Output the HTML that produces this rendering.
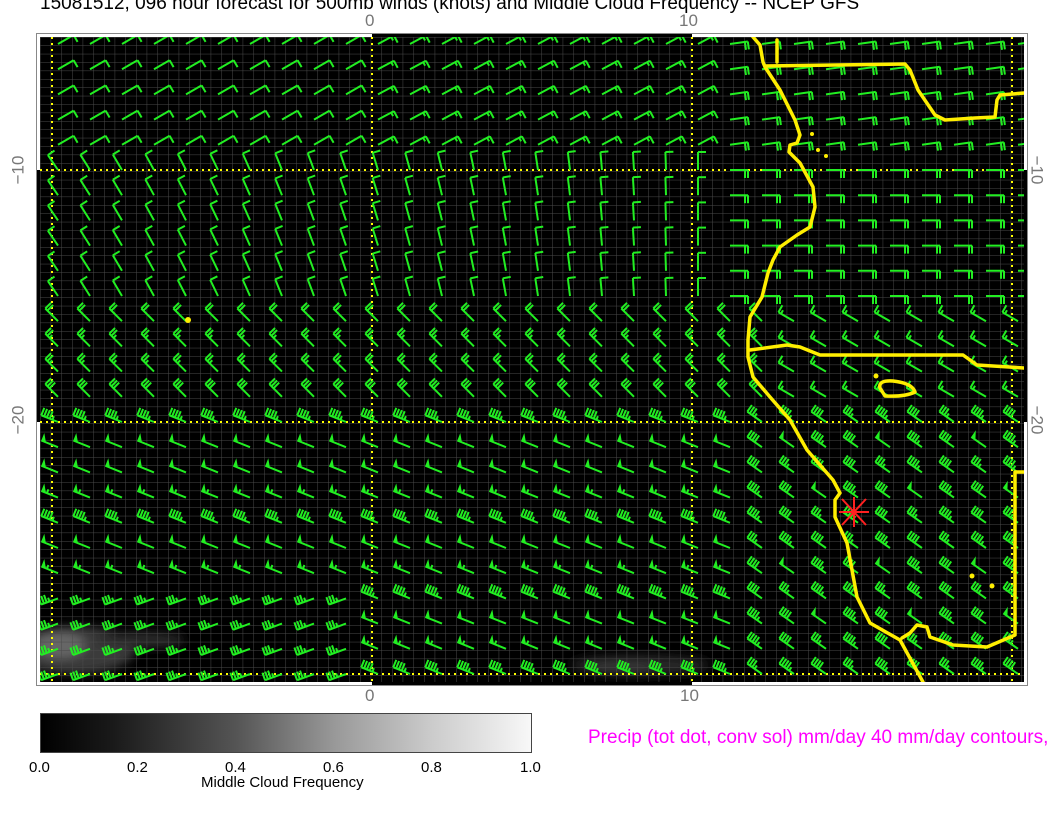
<!DOCTYPE html>
<html><head><meta charset="utf-8">
<style>
html,body{margin:0;padding:0;background:#fff;width:1056px;height:816px;overflow:hidden;position:relative;font-family:"Liberation Sans",Arial,sans-serif;}
.t{position:absolute;white-space:nowrap;}
</style></head>
<body>
<div class="t" style="left:40px;top:-7px;font-size:19px;color:#000;">15081512, 096 hour forecast for 500mb winds (knots) and Middle Cloud Frequency -- NCEP GFS</div>
<svg id="s" width="1056" height="816" style="position:absolute;left:0;top:0">
<defs>
<filter id="bl" x="-50%" y="-50%" width="200%" height="200%"><feGaussianBlur stdDeviation="5"/></filter>
<linearGradient id="cb" x1="0" x2="1" y1="0" y2="0">
<stop offset="0" stop-color="#000"/><stop offset="0.15" stop-color="#1a1a1a"/><stop offset="0.4" stop-color="#555"/><stop offset="0.6" stop-color="#999"/><stop offset="0.8" stop-color="#ccc"/><stop offset="1" stop-color="#f8f8f8"/>
</linearGradient>
<pattern id="g" x="40" y="37" width="10.667" height="8.4" patternUnits="userSpaceOnUse">
<path d="M0 0V8.4M0 0H10.667" stroke="#4a4a4a" stroke-width="1" fill="none"/>
</pattern>
<clipPath id="pc"><rect x="40" y="37" width="984" height="645"/></clipPath>
</defs>
<rect x="36.5" y="33.5" width="991" height="652" fill="#fff" stroke="#888" stroke-width="1"/>
<rect x="372" y="34" width="320" height="3" fill="#000"/>
<rect x="372" y="682" width="320" height="3" fill="#000"/>
<rect x="37" y="170" width="3" height="252" fill="#000"/>
<rect x="1024" y="170" width="3" height="252" fill="#000"/>
<rect x="40" y="37" width="984" height="645" fill="#000"/>
<g clip-path="url(#pc)">
<g filter="url(#bl)">
<ellipse cx="75" cy="650" rx="60" ry="24" fill="#3a3a3a"/>
<ellipse cx="60" cy="645" rx="25" ry="13" fill="#666"/>
<ellipse cx="140" cy="640" rx="45" ry="8" fill="#2a2a2a"/>
<ellipse cx="640" cy="665" rx="70" ry="10" fill="#262626"/>
<ellipse cx="620" cy="668" rx="35" ry="6" fill="#383838"/>
</g>
<rect x="40" y="37" width="984" height="645" fill="url(#g)"/>
<g stroke="#ffff00" stroke-width="2" stroke-dasharray="2 4" fill="none">
<path d="M52 37V682M372 37V682M692 37V682M1012 37V682M40 170H1024M40 422H1024M40 674H1024"/>
</g>
<g id="barbs" stroke="#22ee22" stroke-width="2" fill="#22ee22" stroke-linecap="butt"></g>
<g stroke="#ffee00" stroke-width="3.5" fill="none" stroke-linejoin="round" stroke-linecap="round">
<path d="M753 37L760 45L763 62L765 67L780 90L795 120L800 135L797 143L790 145L789 152L800 163L813 187L815 207L810 227L797 235L780 247L773 260L768 273L762 297L750 317L748 340L748 357L753 377L770 397L790 420L807 450L833 480L840 493L835 500L835 517L847 543L852 570L857 597L870 623L900 640L923 682"/>
<path d="M777 40L777 62M765 66L905 64L910 70L918 90L935 115L945 120L975 118L995 117L997 100L1000 95L1024 93"/>
<path d="M750 350L787 345L800 347L820 355L963 355L977 365L1024 368"/>
<path d="M1024 472H1015V635L987 647L953 645L930 637L927 627L917 625L910 633L902 638"/>
<path d="M880 388Q878 380 893 381Q912 383 915 392Q905 397 885 396Z"/>
</g>
<g fill="#ffee00">
<circle cx="188" cy="320" r="3"/><circle cx="812" cy="134" r="2"/><circle cx="818" cy="150" r="2"/><circle cx="826" cy="156" r="2"/>
<circle cx="876" cy="376" r="2.5"/><circle cx="972" cy="576" r="2.5"/><circle cx="992" cy="586" r="2.5"/>
</g>
<g stroke="#ff2020" stroke-width="2">
<path d="M854 497V527M839 512H869M842 499L866 525M842 525L866 499"/>
</g>
</g>
<rect x="40.5" y="713.5" width="491" height="39" fill="url(#cb)" stroke="#444" stroke-width="1"/>
</svg>
<div class="t" style="left:365px;top:11px;font-size:17px;color:#777;">0</div>
<div class="t" style="left:679px;top:11px;font-size:17px;color:#777;">10</div>
<div class="t" style="left:365px;top:686px;font-size:17px;color:#777;">0</div>
<div class="t" style="left:680px;top:686px;font-size:17px;color:#777;">10</div>
<div class="t" style="left:4px;top:160px;font-size:17px;color:#777;transform:rotate(-90deg);">−10</div>
<div class="t" style="left:4px;top:410px;font-size:17px;color:#777;transform:rotate(-90deg);">−20</div>
<div class="t" style="left:1022px;top:160px;font-size:17px;color:#777;transform:rotate(90deg);">−10</div>
<div class="t" style="left:1022px;top:410px;font-size:17px;color:#777;transform:rotate(90deg);">−20</div>
<div class="t" style="left:29px;top:759px;font-size:15px;">0.0</div>
<div class="t" style="left:127px;top:759px;font-size:15px;">0.2</div>
<div class="t" style="left:225px;top:759px;font-size:15px;">0.4</div>
<div class="t" style="left:323px;top:759px;font-size:15px;">0.6</div>
<div class="t" style="left:421px;top:759px;font-size:15px;">0.8</div>
<div class="t" style="left:520px;top:759px;font-size:15px;">1.0</div>
<div class="t" style="left:201px;top:774px;font-size:15px;">Middle Cloud Frequency</div>
<div class="t" style="left:588px;top:727px;font-size:19px;color:#ff00ff;">Precip (tot dot, conv sol) mm/day 40 mm/day contours,</div>
<script>
(function(){
var g=document.getElementById('barbs'),h='';
function field(x,y){
 var a,s;
 if(y<160){
  if(x<360){a=-30;s=10;} else if(x<700){a=-28;s=15;} else {a=-8;s=20;}
 } else if(y<300){
  if(x<700){a=-125+(x-40)/660*35;s=10;} else {a=0;s=20;}
 } else if(y<420){
  if(x<780){a=-135;s=15+(y-300)/120*20;} else {a=-150;s=15;}
 } else {
  if(x<370&&y>580){a=160;s=35;}
  else if(x>760){a=-145;s=35+((x*7+y*3)%3)*5;}
  else {a=-158;s=45+((x+y)%4)*3;}
 }
 return [a,s];
}
for(var j=0;j<26;j++){
 for(var i=0;i<31;i++){
  var x=52+32*i+6, y=44+25.2*j;
  var f=field(x,y),a=f[0]*Math.PI/180,s=f[1];
  var c=Math.cos(a),sn=Math.sin(a),L=18;
  var ex=x+L*c,ey=y+L*sn,px=-sn,py=c;
  h+='<path d="M'+x.toFixed(1)+' '+y.toFixed(1)+'L'+ex.toFixed(1)+' '+ey.toFixed(1)+'"/>';
  var d=0,rem=Math.round(s/5)*5;
  while(rem>=50){
   var bx=ex-d*c,by=ey-d*sn,qx=ex-(d+5)*c,qy=ey-(d+5)*sn;
   h+='<path stroke="none" d="M'+bx.toFixed(1)+' '+by.toFixed(1)+'L'+(bx+8*px).toFixed(1)+' '+(by+8*py).toFixed(1)+'L'+qx.toFixed(1)+' '+qy.toFixed(1)+'Z"/>';
   d+=6;rem-=50;
  }
  while(rem>=10){
   var bx=ex-d*c,by=ey-d*sn;
   h+='<path d="M'+bx.toFixed(1)+' '+by.toFixed(1)+'l'+(8*px).toFixed(1)+' '+(8*py).toFixed(1)+'"/>';
   d+=3;rem-=10;
  }
  if(rem>=5){
   var bx=ex-d*c,by=ey-d*sn;
   h+='<path d="M'+bx.toFixed(1)+' '+by.toFixed(1)+'l'+(4*px).toFixed(1)+' '+(4*py).toFixed(1)+'"/>';
  }
 }
}
g.innerHTML=h;
})();
</script>
</body></html>
